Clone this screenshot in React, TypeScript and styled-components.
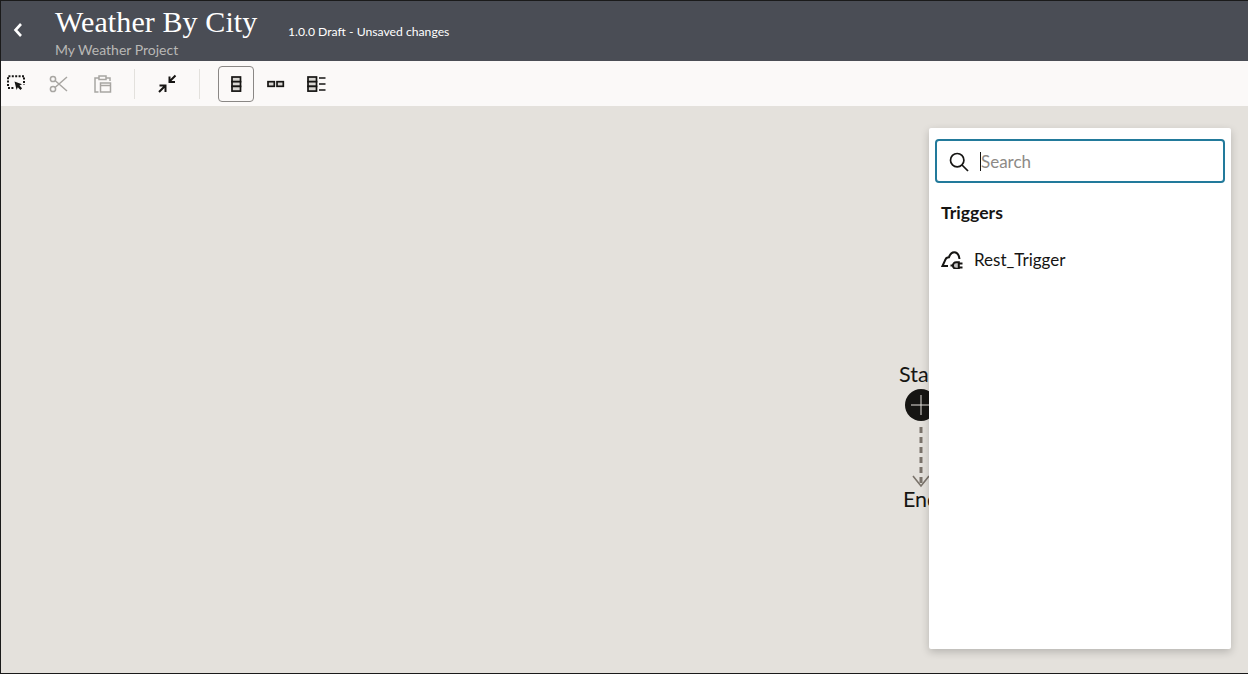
import React from "react";
import styled, { createGlobalStyle } from "styled-components";

const Global = createGlobalStyle`
  html, body { margin: 0; padding: 0; height: 100%; background: #e4e1dc; }
  #root { height: 100%; }
  * { box-sizing: border-box; }
`;
const Page = styled.div`
  width: 1248px; height: 674px; display: flex; flex-direction: column; overflow: hidden;
  border: 1px solid #1a1a1a; border-right: 0; font-family: "Lato", "Noto Sans", sans-serif; position: relative;
`;
const Header = styled.header`
  height: 60px; flex: none; background: #4a4d55; display: flex; align-items: flex-start; color: #fff;
`;
const Back = styled.button`
  width: 54px; height: 60px; border: 0; background: none; padding: 0 0 2px 0; color: #fff; display: flex; align-items: center; justify-content: flex-start;
  svg { margin-left: 12px; }
`;
const Titles = styled.div`display: flex; flex-direction: column; width: 233px; padding-top: 4px;`;
const Title = styled.h1`
  margin: 0; font: 400 30px/34px "Liberation Serif", serif; letter-spacing: 0.1px; color: #fff; white-space: nowrap;
`;
const Sub = styled.div`font-size: 14px; line-height: 20px; color: #b9b8b6; margin-top: 1px;`;
const Version = styled.div`font-size: 12.2px; line-height: 18px; color: #fff; margin-top: 22px;`;
const Toolbar = styled.div`
  height: 45px; flex: none; background: #fbf9f8; display: flex; align-items: center;
`;
const Tool = styled.button<{ $active?: boolean; $narrow?: boolean }>`
  width: ${(p) => (p.$narrow ? 30 : 36)}px; height: 36px; border-radius: 4px; background: none; padding: 0; display: flex; align-items: center; justify-content: center; flex: none;
  border: 1px solid ${(p) => (p.$active ? "#8a8785" : "transparent")};
`;
const Sep = styled.span<{ $gap: number }>`width: 1px; height: 30px; background: #e3e1dd; flex: none; margin-left: ${(p) => p.$gap}px;`;
const Canvas = styled.main`flex: 1; position: relative; background: #e4e1dc;`;
const Node = styled.div<{ $top: number; $left: number }>`
  position: absolute; left: ${(p) => p.$left}px; top: ${(p) => p.$top}px; font-size: 21.5px; line-height: 24px; color: #161513; white-space: nowrap;
`;
const Plus = styled.div`
  position: absolute; left: 904px; top: 283px; width: 32px; height: 32px; border-radius: 50%; background: #161513;
  svg { display: block; }
`;
const Flow = styled.svg`position: absolute; left: 905px; top: 315px;`;
const Panel = styled.aside`
  position: absolute; left: 928px; top: 22px; width: 302px; height: 521px; background: #fff; border-radius: 2px;
  box-shadow: 0 3px 9px rgba(0,0,0,.2); padding: 11px 6px 0;
`;
const SearchBox = styled.div`
  height: 44px; border: 2px solid #227a9b; border-radius: 4px; display: flex; align-items: center; padding: 1px 0 0 12px;
`;
const Caret = styled.span`width: 1px; height: 19px; background: #161513; margin-left: 11px;`;
const SearchInput = styled.span`font-size: 17px; color: #8d8a86; line-height: 22px;`;
const Heading = styled.h2`margin: 19px 0 0 6px; font-size: 17.6px; line-height: 22px; font-weight: 700; color: #161513;`;
const Row = styled.div`display: flex; align-items: center; margin: 24px 0 0 6px; height: 22px; font-size: 17px; color: #161513; gap: 11px;`;

const px = { fill: "none", stroke: "#161513", strokeWidth: 1.5 } as const;
const muted = { fill: "none", stroke: "#a8a6a2", strokeWidth: 1.5 } as const;

const Stack = ({ x = 0 }: { x?: number }) => (
  <g {...px} strokeWidth={1.7}>
    <rect x={x} y="3" width="8.5" height="4.7" fill="#d8d6d2" />
    <rect x={x} y="7.7" width="8.5" height="4.7" fill="#d8d6d2" />
    <rect x={x} y="12.4" width="8.5" height="4.7" fill="#d8d6d2" />
  </g>
);

export default function App() {
  return (
    <Page>
      <Global />
      <Header>
        <Back aria-label="Back">
          <svg width="10" height="16" viewBox="0 0 10 16"><path d="M8 2 2.500 8 8 14" fill="none" stroke="#fff" strokeWidth="2.6" /></svg>
        </Back>
        <Titles>
          <Title>Weather By City</Title>
          <Sub>My Weather Project</Sub>
        </Titles>
        <Version>1.0.0 Draft - Unsaved changes</Version>
      </Header>
      <Toolbar>
        <Tool $narrow aria-label="Select">
          <svg width="18" height="18" viewBox="0 0 18 18">
            <path d="M1 11V1.200h16V10" fill="none" stroke="#161513" strokeWidth="2" strokeDasharray="2 1.400" />
            <path d="M1 13h5.500" fill="none" stroke="#161513" strokeWidth="2" strokeDasharray="2 1.400" />
            <path d="M7.500 6.500 15 9.200l-2.500 1.400 2.600 2.700-1.700 1.600-2.600-2.700-1.200 2.700Z" fill="#161513" />
          </svg>
        </Tool>
        <Tool aria-label="Cut" style={{ marginLeft: 10 }}>
          <svg width="20" height="20" viewBox="0 0 20 20" {...muted}>
            <circle cx="4" cy="5" r="2.600" /><circle cx="4" cy="15" r="2.600" />
            <path d="M6 6.500 18 17M6 13.500 18 3" />
          </svg>
        </Tool>
        <Tool aria-label="Paste" style={{ marginLeft: 8 }}>
          <svg width="20" height="20" viewBox="0 0 20 20" {...muted}>
            <path d="M5.500 18H2V4h4M13 4h4v3" />
            <rect x="6" y="2" width="7" height="3.500" />
            <rect x="7.500" y="9" width="10" height="9" />
            <path d="M7.500 11.500h10" />
          </svg>
        </Tool>
        <Sep $gap={13} />
        <Tool aria-label="Collapse" style={{ marginLeft: 14 }}>
          <svg width="20" height="20" viewBox="0 0 20 20" fill="none" stroke="#161513" strokeWidth="2">
            <path d="M18.500 1.500 12 8M12.500 2.500V8H18" />
            <path d="M8.500 11.500 2 18M2.500 11.500h6V18" />
          </svg>
        </Tool>
        <Sep $gap={14} />
        <Tool $active aria-label="Vertical" style={{ marginLeft: 18 }}>
          <svg width="20" height="20" viewBox="0 0 20 20"><Stack x={6} /></svg>
        </Tool>
        <Tool aria-label="Horizontal" style={{ marginLeft: 4 }}>
          <svg width="20" height="20" viewBox="0 0 20 20" {...px} strokeWidth={1.7}>
            <rect x="2" y="7.700" width="6.300" height="4.600" fill="#d8d6d2" />
            <rect x="11" y="7.700" width="6.300" height="4.600" fill="#d8d6d2" />
          </svg>
        </Tool>
        <Tool aria-label="Details" style={{ marginLeft: 4 }}>
          <svg width="20" height="20" viewBox="0 0 20 20">
            <Stack x={2} />
            <path d="M13 4h6.500M13 10h6.500M13 16h6.500" stroke="#161513" strokeWidth="1.700" />
          </svg>
        </Tool>
      </Toolbar>
      <Canvas>
        <Node $top={256} $left={898}>Start</Node>
        <Plus>
          <svg width="32" height="32" viewBox="0 0 32 32"><path d="M16 6v20M6 16h20" stroke="#e4e1dc" strokeWidth="1" /></svg>
        </Plus>
        <Flow width="30" height="70" viewBox="0 0 30 70">
          <path d="M15 6V64" stroke="#7a736b" strokeWidth="3" strokeDasharray="6 4" fill="none" />
          <path d="M7 55 15 65 23 55" stroke="#7a736b" strokeWidth="1.600" fill="none" />
        </Flow>
        <Node $top={381} $left={902}>End</Node>
        <Panel>
          <SearchBox>
            <svg width="20" height="20" viewBox="0 0 20 20" fill="none" stroke="#161513" strokeWidth="1.700">
              <circle cx="8.200" cy="8.200" r="6.700" /><path d="M13 13l6 6" />
            </svg>
            <Caret />
            <SearchInput>Search</SearchInput>
          </SearchBox>
          <Heading>Triggers</Heading>
          <Row>
            <svg width="22" height="20" viewBox="0 0 22 20" fill="none" stroke="#161513" strokeWidth="2">
              <path d="M7 17H1.500L4.500 10.500C5 9 6.500 8.300 8 8.300 9 5 11 3.200 13.200 3.200 15.800 3.200 18 6 18.500 10" />
              <path d="M9.500 16.500h3" />
              <path d="M17.800 13.200h-2.600a3.300 3.300 0 0 0 0 6.600h2.600Z" fill="#161513" fillOpacity=".25" />
              <path d="M18 14.500h3.500M18 18.500h3.500" />
            </svg>
            Rest_Trigger
          </Row>
        </Panel>
      </Canvas>
    </Page>
  );
}
